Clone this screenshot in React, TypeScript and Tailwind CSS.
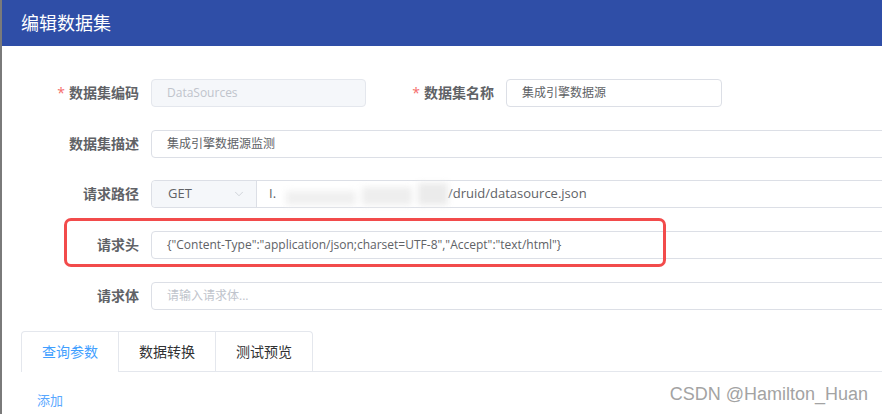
import { ChevronDown } from "lucide-react";

const font = { fontFamily: '"Open Sans", "Noto Sans CJK SC", sans-serif' };

function Label({ text, required, w }: { text: string; required?: boolean; w: string }) {
  return (
    <div className={`${w} shrink-0 pr-[12px] text-right text-[14px] font-semibold text-[#606266] leading-[28px]`}>
      {required && <span className="mr-[4px] text-[#f56c6c] font-normal">*</span>}
      {text}
    </div>
  );
}

export default function App() {
  return (
    <div className="relative h-[414px] w-full overflow-hidden border-l-2 border-[#7a7a7a] bg-white" style={font}>
      {/* title bar */}
      <div className="flex h-[46px] items-center bg-[#2f4ea7] px-[19px] text-[18px] text-white">编辑数据集</div>

      <div className="pt-[33px]">
        {/* row 1 */}
        <div className="flex h-[28px] items-center">
          <Label text="数据集编码" required w="w-[149px]" />
          <div className="flex h-[28px] w-[215px] items-center rounded-[4px] border border-[#e4e7ed] bg-[#f5f7fa] px-[15px] text-[12px] text-[#c0c4cc]">
            DataSources
          </div>
          <Label text="数据集名称" required w="w-[140px]" />
          <div className="flex h-[28px] w-[216px] items-center rounded-[4px] border border-[#dcdfe6] px-[15px] text-[12px] text-[#606266]">
            集成引擎数据源
          </div>
        </div>

        {/* row 2 */}
        <div className="mt-[23px] flex h-[28px] items-center">
          <Label text="数据集描述" w="w-[149px]" />
          <div className="flex h-[28px] w-[760px] shrink-0 items-center rounded-[4px] border border-[#dcdfe6] px-[15px] text-[12px] text-[#606266]">
            集成引擎数据源监测
          </div>
        </div>

        {/* row 3 */}
        <div className="mt-[22px] flex h-[28px] items-center">
          <Label text="请求路径" w="w-[149px]" />
          <div className="flex h-[28px] w-[760px] shrink-0 rounded-[4px] border border-[#dcdfe6]">
            <div className="flex w-[105px] items-center justify-between rounded-l-[4px] border-r border-[#dcdfe6] bg-[#f5f7fa] pl-[16px] pr-[10px] text-[13px] text-[#606266]">
              GET
              <ChevronDown size={14} strokeWidth={1.2} className="text-[#c0c4cc]" />
            </div>
            <div className="flex items-center pl-[12px] text-[13px] text-[#606266]">
              <span>I.</span>
              {/* blurred-out host */}
              <span className="ml-[10px] flex h-[22px] w-[162px] items-end gap-[6px] blur-[3px]">
                <span className="h-[14px] w-[70px] bg-[#f0f0f0]" />
                <span className="h-[18px] w-[50px] bg-[#eeeeee]" />
                <span className="h-[22px] w-[30px] bg-[#ebebeb]" />
              </span>
              <span>/druid/datasource.json</span>
            </div>
          </div>
        </div>

        {/* row 4 */}
        <div className="mt-[23px] flex h-[28px] items-center">
          <Label text="请求头" w="w-[149px]" />
          <div className="flex h-[28px] w-[760px] shrink-0 items-center rounded-[4px] border border-[#dcdfe6] px-[15px] text-[12px] text-[#606266]">
            {'{"Content-Type":"application/json;charset=UTF-8","Accept":"text/html"}'}
          </div>
        </div>

        {/* row 5 */}
        <div className="mt-[23px] flex h-[28px] items-center">
          <Label text="请求体" w="w-[149px]" />
          <div className="flex h-[28px] w-[760px] shrink-0 items-center rounded-[4px] border border-[#dcdfe6] px-[15px] text-[12px] text-[#c0c4cc]">
            请输入请求体...
          </div>
        </div>

        {/* tabs */}
        <div className="mt-[21px] flex pl-[19px]">
          <div className="flex rounded-t-[4px] border border-b-0 border-[#e4e7ed]">
            <div className="flex h-[40px] w-[96px] items-center justify-center border-b border-white text-[14px] text-[#409eff]">查询参数</div>
            <div className="flex h-[40px] w-[97px] items-center justify-center border-b border-l border-[#e4e7ed] text-[14px] text-[#303133]">数据转换</div>
            <div className="flex h-[40px] w-[97px] items-center justify-center border-b border-l border-[#e4e7ed] text-[14px] text-[#303133]">测试预览</div>
          </div>
          <div className="flex-1 border-b border-[#e4e7ed]" />
        </div>

        <div className="mt-[19px] pl-[35px] text-[13px] text-[#5aa8ff]">添加</div>
      </div>

      {/* annotation box */}
      <div className="absolute left-[62px] top-[218px] h-[49px] w-[602px] rounded-[7px] border-[3px] border-[#f24b4b]" />

      {/* watermark */}
      <div
        className="absolute bottom-[6px] right-[14px] text-[18px] text-[#a3a3a3]"
        style={{ fontFamily: '"Liberation Sans", sans-serif', textShadow: "0 0 1px #fff" }}
      >
        CSDN @Hamilton_Huan
      </div>
    </div>
  );
}
